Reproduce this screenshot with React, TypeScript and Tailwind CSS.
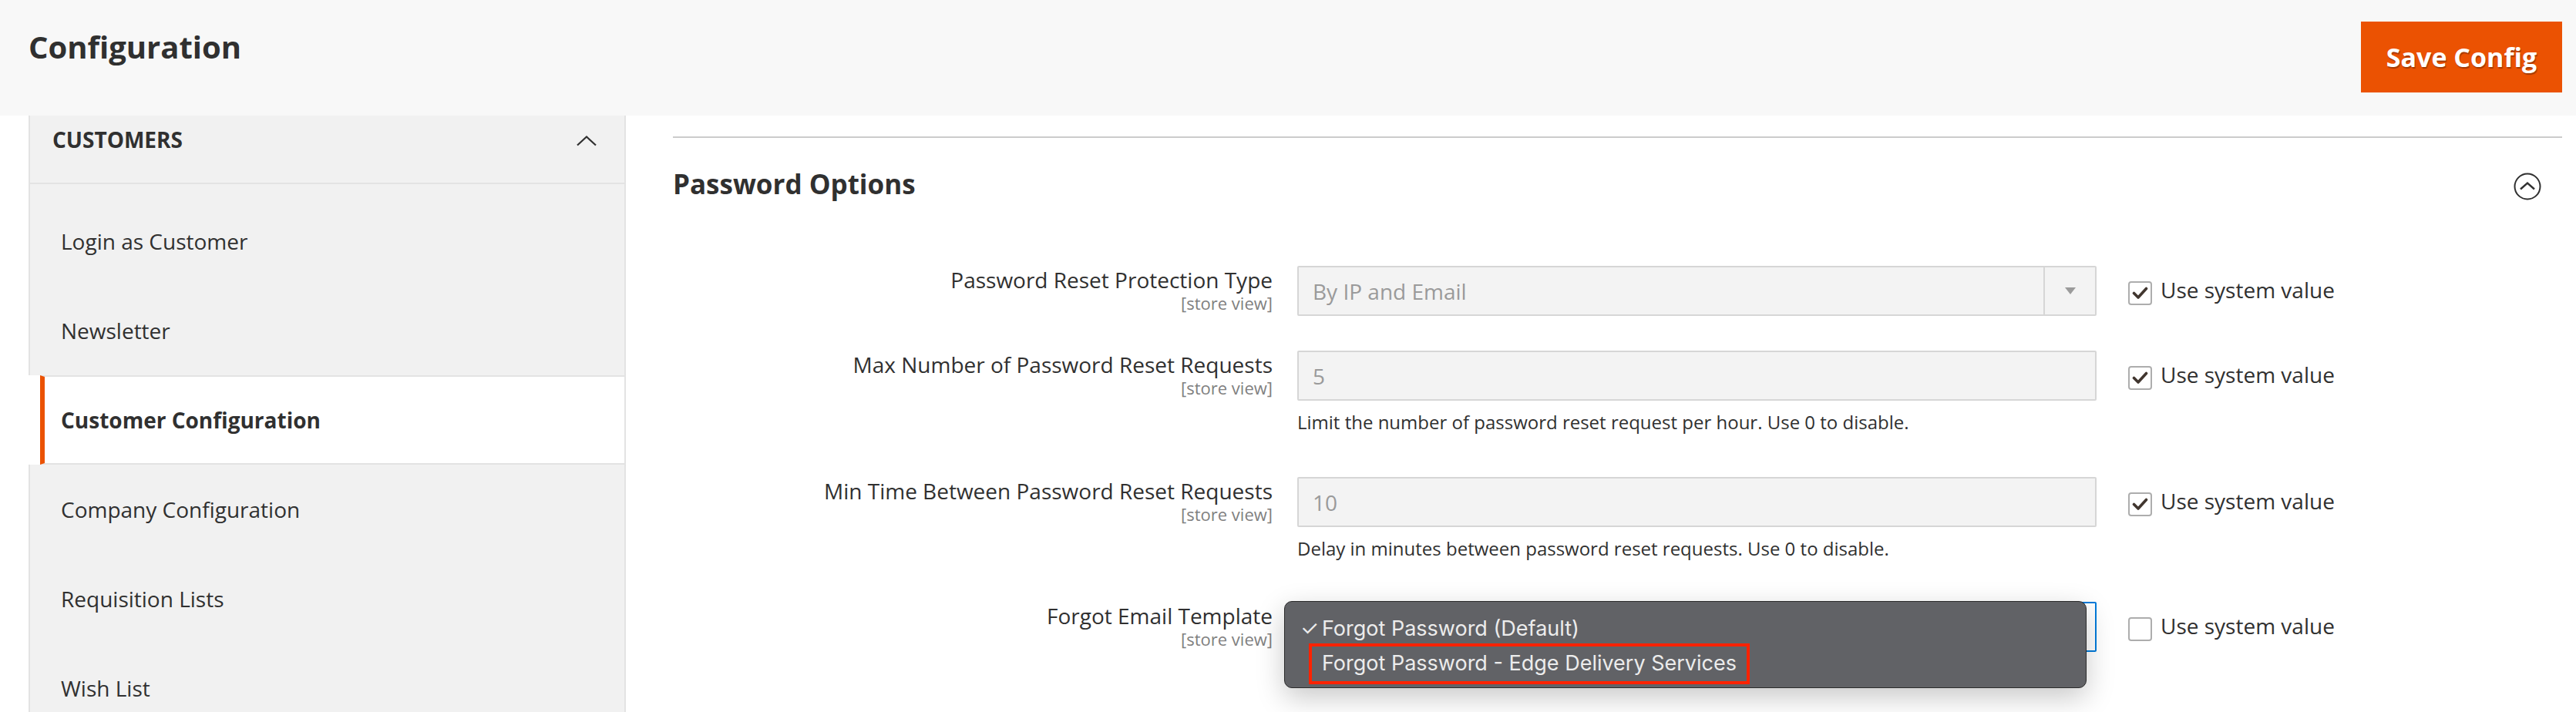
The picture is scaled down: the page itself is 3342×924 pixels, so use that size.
import React from "react";

const SIDEBAR_ITEMS = [
  "Login as Customer",
  "Newsletter",
  "Customer Configuration",
  "Company Configuration",
  "Requisition Lists",
  "Wish List",
];
const ACTIVE = "Customer Configuration";

function Check() {
  return (
    <svg width="21" height="17" viewBox="0 0 21 17" fill="none">
      <path d="M2.5 8.5 L8 14 L18.5 2.5" stroke="#41362f" strokeWidth="3.6" strokeLinecap="round" strokeLinejoin="round" />
    </svg>
  );
}

function SystemValue({ checked }: { checked: boolean }) {
  return (
    <div className="ml-[41px] flex items-start">
      <div className="mt-[20px] flex h-[31px] w-[31px] items-center justify-center rounded-[4px] border-2 border-[#adadad] bg-white">
        {checked && <Check />}
      </div>
      <span className="ml-[11px] mt-[13px] text-[28px] leading-[36px] text-[#303030]">Use system value</span>
    </div>
  );
}

function Field({
  label,
  note,
  checked,
  children,
}: {
  label: string;
  note?: string;
  checked: boolean;
  children: React.ReactNode;
}) {
  return (
    <div className="flex items-start">
      <div className="w-[778px] shrink-0 text-right">
        <div className="text-[28px] leading-[36px] text-[#303030]">{label}</div>
        <div className="text-[22px] leading-[24px] text-[#808080]">[store view]</div>
      </div>
      <div className="ml-[32px] w-[1037px] shrink-0">
        {children}
        {note && <div className="mt-[13px] text-[24px] leading-[30px] text-[#303030]">{note}</div>}
      </div>
      <SystemValue checked={checked} />
    </div>
  );
}

function DisabledInput({ value }: { value: string }) {
  return (
    <div className="flex h-[65px] items-center rounded-[2px] border-2 border-[#d6d6d6] bg-[#f3f3f3] pl-[18px] text-[28px] text-[#9a9a9a]">
      {value}
    </div>
  );
}

export default function App() {
  return (
    <div className="h-[924px] w-[3342px] overflow-hidden bg-white font-['Open_Sans',sans-serif] text-[#303030]">
      {/* page header */}
      <header className="flex h-[150px] items-start justify-between bg-[#f8f8f8] pl-[37px] pr-[18px]">
        <h1 className="mt-[36px] text-[40px] font-bold leading-[50px] text-[#303030]">Configuration</h1>
        <button className="mt-[28px] h-[92px] w-[261px] bg-[#eb5202] text-[34px] font-bold text-white [text-shadow:1px_2px_1px_rgba(0,0,0,0.3)]">
          Save Config
        </button>
      </header>

      <div className="flex">
        {/* sidebar */}
        <aside className="ml-[37px] w-[775px] shrink-0">
          <div className="flex h-[89px] items-start justify-between border-x-2 border-b-2 border-[#e3e3e3] bg-[#f1f1f1] pl-[29px] pr-[35px] pt-[13px]">
            <span className="text-[28px] font-bold uppercase leading-[36px]">Customers</span>
            <svg width="28" height="14" viewBox="0 0 28 14" fill="none" className="mt-[13px]">
              <path d="M2 12.5 L14 1.5 L26 12.5" stroke="#303030" strokeWidth="2.2" />
            </svg>
          </div>
          <div className="h-[16px] border-x-2 border-[#e3e3e3] bg-[#f1f1f1]" />
          {SIDEBAR_ITEMS.map((item) =>
            item === ACTIVE ? (
              <div
                key={item}
                className="ml-[15px] flex h-[116px] items-center border-y-2 border-l-[6px] border-r-2 border-[#e3e3e3] border-l-[#eb5202] bg-white pl-[21px] text-[28px] font-bold"
              >
                {item}
              </div>
            ) : (
              <div
                key={item}
                className="flex h-[116px] items-center border-x-2 border-[#e3e3e3] bg-[#f1f1f1] pl-[40px] text-[28px]"
              >
                {item}
              </div>
            )
          )}
        </aside>

        {/* main */}
        <main className="ml-[61px] mr-[18px] flex-1 pt-[27px]">
          <div className="h-[2px] bg-[#cccccc]" />
          <div className="mt-[40px] flex items-start justify-between">
            <h2 className="text-[35px] font-bold leading-[40px]">Password Options</h2>
            <svg width="36" height="36" viewBox="0 0 36 36" fill="none" className="mr-[27px] mt-[5px]">
              <circle cx="18" cy="18" r="16.5" stroke="#303030" strokeWidth="2" />
              <path d="M9 21.5 L18 13.5 L27 21.5" stroke="#303030" strokeWidth="2.4" />
            </svg>
          </div>

          <div className="mt-[85px] flex flex-col">
            <Field label="Password Reset Protection Type" checked>
              <div className="flex h-[65px] items-center rounded-[2px] border-2 border-[#d6d6d6] bg-[#f3f3f3]">
                <span className="pl-[18px] text-[28px] text-[#9a9a9a]">By IP and Email</span>
                <div className="ml-auto flex h-full w-[67px] items-center justify-center border-l-2 border-[#d6d6d6]">
                  <svg width="14" height="9" viewBox="0 0 14 9">
                    <path d="M0 0 H14 L7 9 Z" fill="#9b9b9b" />
                  </svg>
                </div>
              </div>
            </Field>

            <div className="mt-[45px]">
              <Field
                label="Max Number of Password Reset Requests"
                note="Limit the number of password reset request per hour. Use 0 to disable."
                checked
              >
                <DisabledInput value="5" />
              </Field>
            </div>

            <div className="mt-[56px]">
              <Field
                label="Min Time Between Password Reset Requests"
                note="Delay in minutes between password reset requests. Use 0 to disable."
                checked
              >
                <DisabledInput value="10" />
              </Field>
            </div>

            <div className="mt-[54px]">
              <Field label="Forgot Email Template" checked={false}>
                <div className="relative h-[65px] rounded-[2px] border-2 border-[#007bdb] bg-white">
                  {/* native select popup */}
                  <div className="absolute -left-[19px] -top-[3px] z-10 flex h-[113px] w-[1041px] flex-col rounded-[10px] border border-[#2b2b2b] bg-[#616266] pt-[17px] font-['Inter',sans-serif] text-[27px] text-[#ececec] shadow-[0_12px_36px_rgba(0,0,0,0.22)]">
                    <div className="flex h-[36px] items-center pl-[20px]">
                      <span className="w-[28px]">✓</span>
                      <span>Forgot Password (Default)</span>
                    </div>
                    <div className="ml-[31px] mt-[1px] flex h-[53px] w-[572px] items-center border-4 border-[#ff2200] pl-[13px]">
                      Forgot Password - Edge Delivery Services
                    </div>
                  </div>
                </div>
              </Field>
            </div>
          </div>
        </main>
      </div>
    </div>
  );
}
